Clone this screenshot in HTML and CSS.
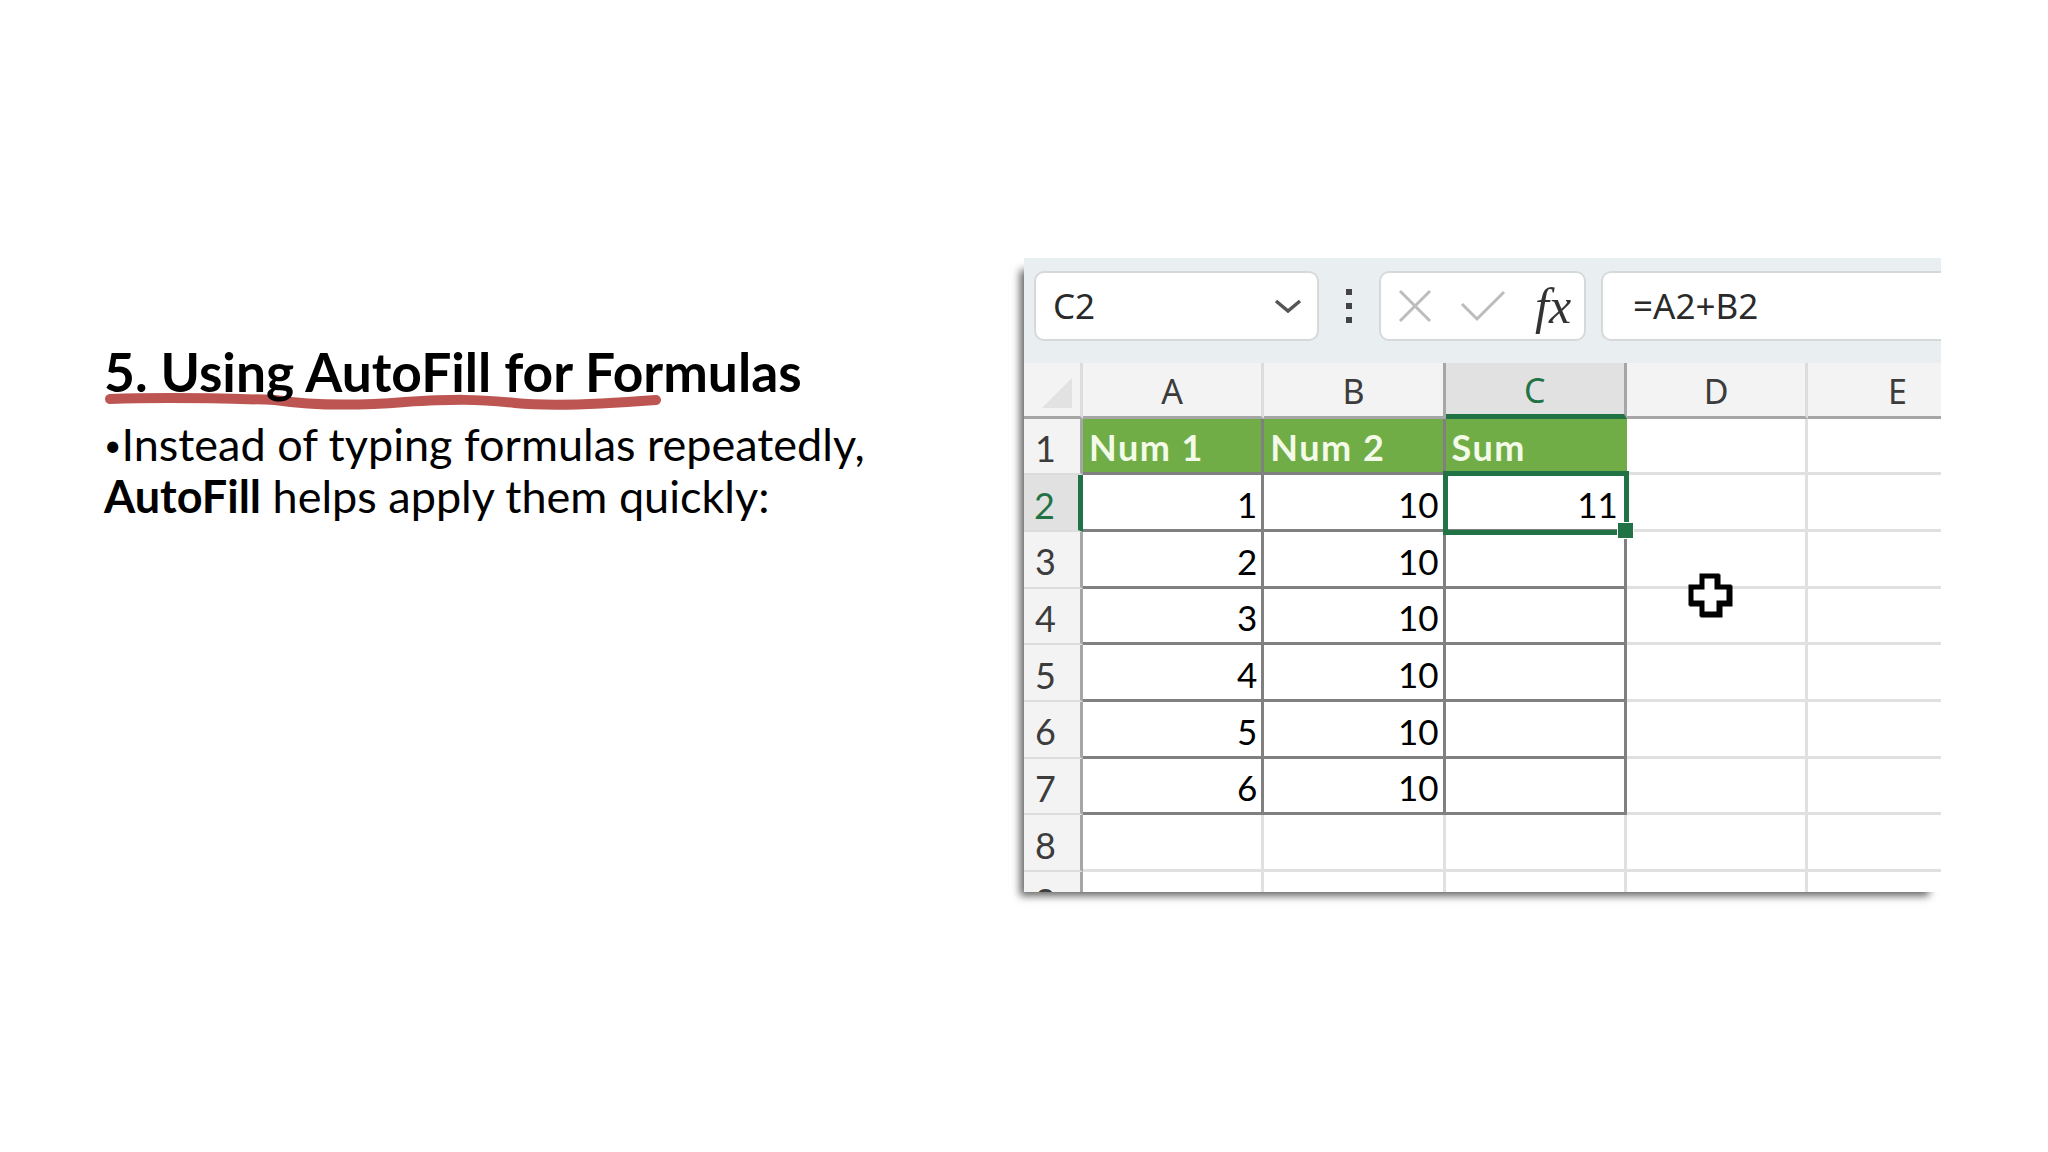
FILE: index.html
```html
<!DOCTYPE html>
<html lang="en">
<head>
  <meta charset="UTF-8" />
  <title>Using AutoFill for Formulas</title>
  <link rel="stylesheet" href="styles.css">
</head>
<body>

<main class="slide">
  <section class="notes">
    <h1 class="notes-title">
      <svg class="scribble" viewBox="0 0 556 18" preserveAspectRatio="none">
        <path d="M5 6 C60 4 110 5 170 7 C210 13 250 13 300 9 C350 6 370 6 410 10 C450 14 500 11 551 7" />
      </svg>
      <span>5. Using AutoFill for Formulas</span>
    </h1>
    <p class="notes-body"><span class="bullet">•</span>Instead of typing formulas repeatedly,<br><b>AutoFill</b> helps apply them quickly:</p>
  </section>

  <section class="sheet">
    <div class="formula-bar">
      <div class="name-box">
        <span>C2</span>
        <svg class="chevron" viewBox="0 0 28 14"><path d="M2 2 L14 12 L26 2" /></svg>
      </div>
      <div class="kebab"><i></i><i></i><i></i></div>
      <div class="fx-box">
        <svg class="icon-cancel" viewBox="0 0 34 34"><path d="M2 2 L32 32 M32 2 L2 32" /></svg>
        <svg class="icon-enter" viewBox="0 0 46 32"><path d="M2 14 L17 29 L44 2" /></svg>
        <span class="fx">fx</span>
      </div>
      <div class="formula-box">=A2+B2</div>
    </div>

    <div class="grid">
      <div class="hd corner"><div class="corner-mark"></div></div>
      <div class="hd col">A</div>
      <div class="hd col edge">B</div>
      <div class="hd col active-col">C</div>
      <div class="hd col">D</div>
      <div class="hd col">E</div>

      <div class="hd row">1</div>
      <div class="cell title dark">Num 1</div>
      <div class="cell title dark">Num 2</div>
      <div class="cell title sum">Sum</div>
      <div class="cell"></div>
      <div class="cell"></div>

      <div class="hd row active-row">2</div>
      <div class="cell num dark">1</div>
      <div class="cell num dark">10</div>
      <div class="cell num dark selected">11</div>
      <div class="cell"></div>
      <div class="cell"></div>

      <div class="hd row">3</div>
      <div class="cell num dark">2</div>
      <div class="cell num dark">10</div>
      <div class="cell dark"></div>
      <div class="cell"></div>
      <div class="cell"></div>

      <div class="hd row">4</div>
      <div class="cell num dark">3</div>
      <div class="cell num dark">10</div>
      <div class="cell dark"></div>
      <div class="cell"></div>
      <div class="cell"></div>

      <div class="hd row">5</div>
      <div class="cell num dark">4</div>
      <div class="cell num dark">10</div>
      <div class="cell dark"></div>
      <div class="cell"></div>
      <div class="cell"></div>

      <div class="hd row">6</div>
      <div class="cell num dark">5</div>
      <div class="cell num dark">10</div>
      <div class="cell dark"></div>
      <div class="cell"></div>
      <div class="cell"></div>

      <div class="hd row">7</div>
      <div class="cell num dark">6</div>
      <div class="cell num dark">10</div>
      <div class="cell dark"></div>
      <div class="cell"></div>
      <div class="cell"></div>

      <div class="hd row">8</div>
      <div class="cell"></div>
      <div class="cell"></div>
      <div class="cell"></div>
      <div class="cell"></div>
      <div class="cell"></div>

      <div class="hd row">9</div>
      <div class="cell"></div>
      <div class="cell"></div>
      <div class="cell"></div>
      <div class="cell"></div>
      <div class="cell"></div>
    </div>

    <svg class="cursor" viewBox="0 0 44 44">
      <path d="M14 3 H29 V14 H41 V30 H31 V41 H14 V30 H3 V14 H14 Z" />
    </svg>
  </section>
</main>

</body>
</html>
```

FILE: styles.css
```css
:root {
  --excel-green: #217346;
  --title-green: #70ad47;
  --line-dark: #808080;
  --line-light: #e0e0e0;
  --bar-bg: #e9eff1;
  --head-bg: #f3f3f3;
}

* {
  box-sizing: border-box;
}

body {
  margin: 0;
  height: 1152px;
  overflow: hidden;
  background: white;
  color: black;
  font-family: 'Lato', sans-serif;
}

.slide {
  display: flex;
  justify-content: space-between;
  padding: 258px 107px 0 104px;
}

.notes {
  padding-top: 83px;
}

.notes-title {
  position: relative;
  margin: 0 0 17px;
  font-size: 53.3px;
  line-height: 60px;
  font-weight: 700;
  white-space: nowrap;
}

.notes-title span {
  position: relative;
}

.scribble {
  position: absolute;
  left: 1px;
  top: 52px;
  width: 556px;
  height: 18px;
}

.scribble path {
  fill: none;
  stroke: #bd5652;
  stroke-width: 10;
  stroke-linecap: round;
}

.notes-body {
  margin: 0;
  font-size: 45px;
  line-height: 52px;
  white-space: nowrap;
}

.bullet {
  font-size: 30px;
  vertical-align: 5px;
}

/* spreadsheet picture */
.sheet {
  position: relative;
  width: 917px;
  height: 634px;
  background: white;
  box-shadow: -8px 8px 8px -4px rgba(0, 0, 0, 0.6);
}

.formula-bar {
  display: flex;
  align-items: center;
  height: 105px;
  padding: 0 0 10px 10px;
  background: var(--bar-bg);
  overflow: hidden;
  font-family: 'Noto Sans', sans-serif;
  font-size: 35px;
  color: #2a2a2a;
}

.name-box,
.fx-box,
.formula-box {
  display: flex;
  align-items: center;
  height: 70px;
  background: white;
  border: 2px solid #d6d9da;
  border-radius: 10px;
}

.name-box {
  width: 285px;
  padding: 0 15px 0 17px;
  justify-content: space-between;
  flex-shrink: 0;
}

.chevron {
  width: 28px;
  height: 14px;
}

.chevron path {
  fill: none;
  stroke: #555;
  stroke-width: 3.5;
}

.kebab {
  display: flex;
  flex-direction: column;
  gap: 8px;
  width: 60px;
  align-items: center;
  flex-shrink: 0;
}

.kebab i {
  width: 6px;
  height: 6px;
  background: #444;
}

.fx-box {
  width: 207px;
  padding-left: 17px;
  margin-right: 15px;
  flex-shrink: 0;
}

.icon-cancel {
  width: 34px;
  height: 34px;
  margin-right: 28px;
}

.icon-enter {
  width: 46px;
  height: 32px;
  margin-right: 29px;
}

.icon-cancel path,
.icon-enter path {
  fill: none;
  stroke: #bcbcbc;
  stroke-width: 3;
}

.fx {
  font-family: 'Liberation Serif', serif;
  font-style: italic;
  font-size: 50px;
  line-height: 1;
  color: #333;
}

.formula-box {
  flex: 1;
  min-width: 0;
  padding-left: 30px;
  border-right: none;
  border-radius: 10px 0 0 10px;
}

.grid {
  display: grid;
  grid-template-columns: 59px repeat(5, 181.3px);
  grid-template-rows: 55.5px repeat(9, 56.7px);
  height: 529px;
  overflow: hidden;
}

.hd {
  display: flex;
  align-items: center;
  justify-content: center;
  padding-top: 4px;
  background: var(--head-bg);
  font-family: 'Noto Sans', sans-serif;
  font-size: 34px;
  color: #3c3c3c;
  border-bottom: 2px solid #dcdcdc;
}

.col {
  border-right: 3px solid #dcdcdc;
  border-bottom: 3px solid #a6a6a6;
}

.edge {
  border-right-color: #a6a6a6;
}

.row {
  font-family: 'Lato', sans-serif;
  font-size: 36px;
  border-right: 3px solid #a6a6a6;
  padding-right: 13px;
}

.corner {
  align-items: flex-end;
  justify-content: flex-end;
  padding: 0 8px 8px 0;
  border-right: 3px solid #dcdcdc;
  border-bottom: 3px solid #a6a6a6;
}

.corner-mark {
  width: 0;
  height: 0;
  border-left: 30px solid transparent;
  border-bottom: 30px solid #e2e2e2;
}

.active-col {
  background: #e1e1e1;
  color: var(--excel-green);
  border-right-color: #a6a6a6;
  border-bottom: 5px solid var(--excel-green);
}

.active-row {
  background: #e1e1e1;
  color: var(--excel-green);
  border-right: 5px solid var(--excel-green);
}

.cell {
  display: flex;
  align-items: center;
  padding: 4px 4px 0 6px;
  font-size: 35px;
  border-right: 3px solid var(--line-light);
  border-bottom: 3px solid var(--line-light);
}

.dark {
  border-right-color: var(--line-dark);
  border-bottom-color: var(--line-dark);
}

.title {
  background: var(--title-green);
  color: #f4fae8;
  font-size: 36px;
  font-weight: 700;
  letter-spacing: 1.5px;
}

.sum {
  border-right-color: var(--title-green);
  border-bottom-color: var(--excel-green);
}

.num {
  justify-content: flex-end;
}

.selected {
  position: relative;
  padding-right: 6px;
}

.selected::before {
  content: '';
  position: absolute;
  left: -3px;
  top: -4px;
  right: -5px;
  bottom: -6px;
  border: 5px solid var(--excel-green);
}

.selected::after {
  content: '';
  position: absolute;
  right: -9px;
  bottom: -9px;
  width: 15px;
  height: 15px;
  background: var(--excel-green);
  outline: 1px solid white;
}

.cursor {
  position: absolute;
  left: 664px;
  top: 315px;
  width: 44px;
  height: 44px;
  filter: drop-shadow(1px 1px 0 black);
}

.cursor path {
  fill: white;
  stroke: black;
  stroke-width: 5;
}
```
